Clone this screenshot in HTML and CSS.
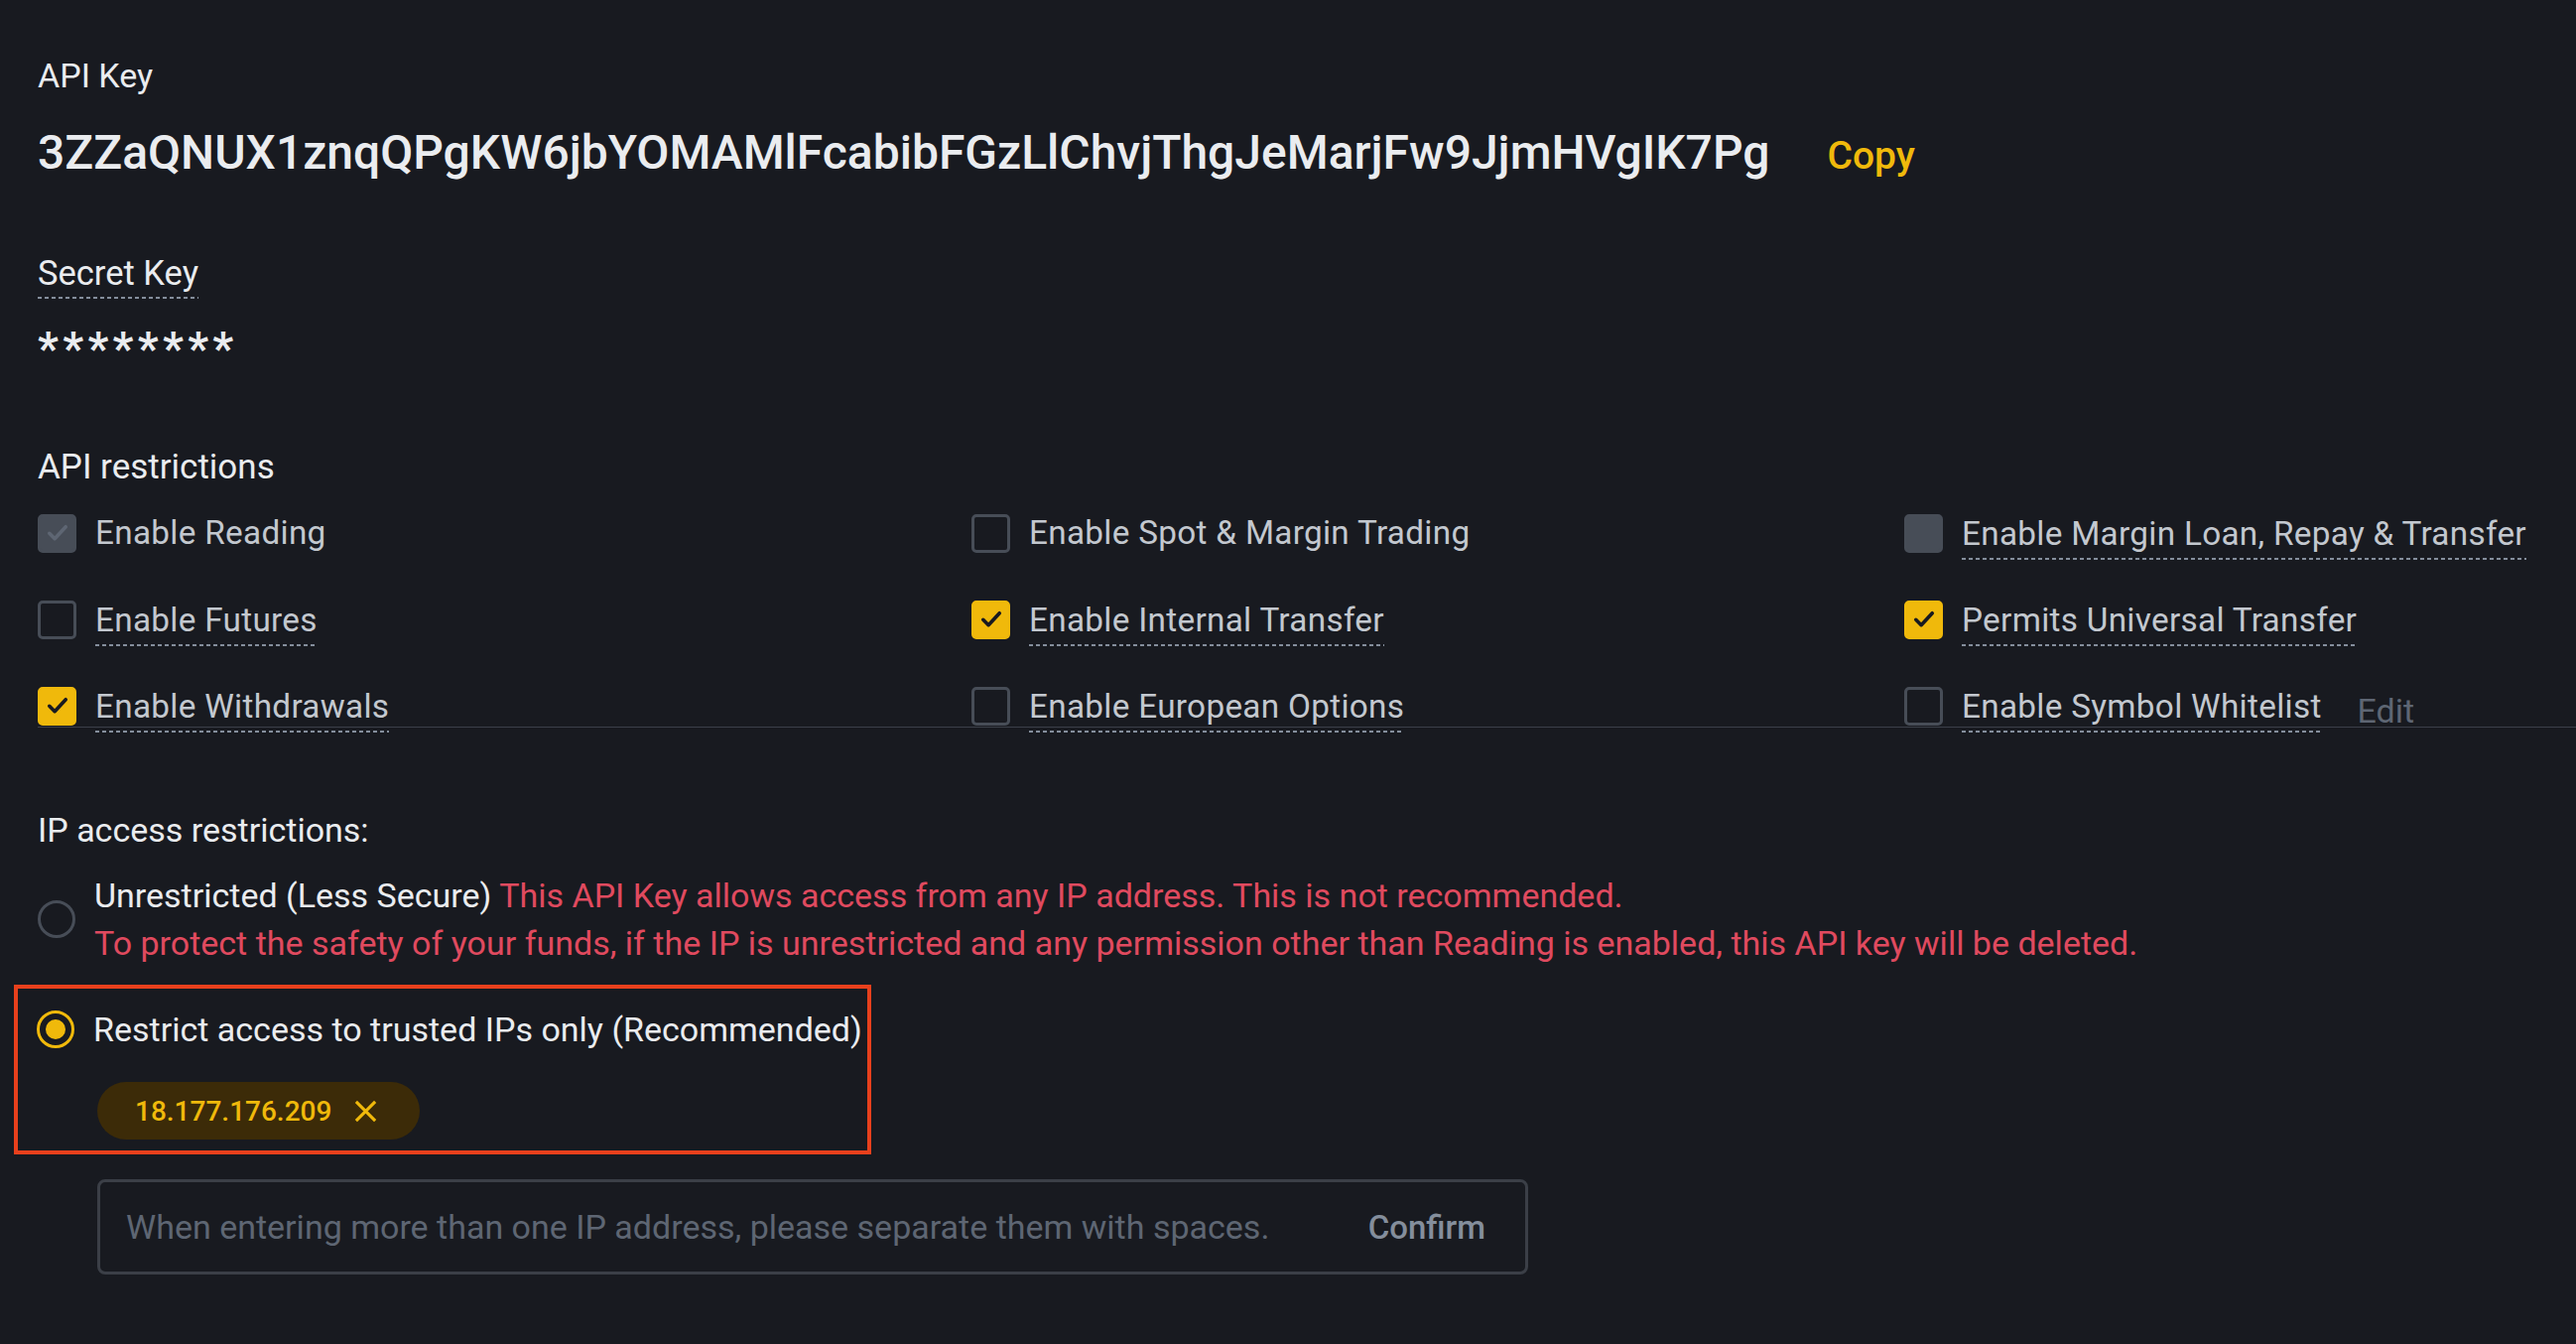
FILE: index.html
```html
<!DOCTYPE html>
<html lang="en">
<head>
<meta charset="utf-8">
<title>API Key</title>
<link rel="stylesheet" href="styles.css">
</head>
<body>
<div class="page">
  <section class="keys">
    <div class="field-label">API Key</div>
    <div class="key-row">
      <span class="key-value">3ZZaQNUX1znqQPgKW6jbYOMAMlFcabibFGzLlChvjThgJeMarjFw9JjmHVgIK7Pg</span>
      <span class="copy">Copy</span>
    </div>
    <div class="field-label secret"><span class="dashed">Secret Key</span></div>
    <div class="stars">********</div>
  </section>

  <div class="section-title">API restrictions</div>
  <div class="perm-grid">
    <div class="perm"><span class="cb cb-disabled-checked"><svg viewBox="0 0 20 20"><path d="M4.5 10.2l3.6 3.6 7.4-8"/></svg></span><span class="perm-label">Enable Reading</span></div>
    <div class="perm"><span class="cb"></span><span class="perm-label">Enable Spot &amp; Margin Trading</span></div>
    <div class="perm"><span class="cb cb-disabled"></span><span class="perm-label dashed">Enable Margin Loan, Repay &amp; Transfer</span></div>

    <div class="perm"><span class="cb"></span><span class="perm-label dashed">Enable Futures</span></div>
    <div class="perm"><span class="cb cb-checked"><svg viewBox="0 0 20 20"><path d="M4.5 10.2l3.6 3.6 7.4-8"/></svg></span><span class="perm-label dashed">Enable Internal Transfer</span></div>
    <div class="perm"><span class="cb cb-checked"><svg viewBox="0 0 20 20"><path d="M4.5 10.2l3.6 3.6 7.4-8"/></svg></span><span class="perm-label dashed">Permits Universal Transfer</span></div>

    <div class="perm"><span class="cb cb-checked"><svg viewBox="0 0 20 20"><path d="M4.5 10.2l3.6 3.6 7.4-8"/></svg></span><span class="perm-label dashed">Enable Withdrawals</span></div>
    <div class="perm"><span class="cb"></span><span class="perm-label dashed">Enable European Options</span></div>
    <div class="perm"><span class="cb"></span><span class="perm-label dashed">Enable Symbol Whitelist</span><span class="edit">Edit</span></div>
  </div>
  <div class="divider"></div>

  <div class="section-title ip-title">IP access restrictions:</div>
  <div class="radio-option unrestricted">
    <span class="radio"></span>
    <div class="radio-text">
      <div><span class="opt-label">Unrestricted (Less Secure)</span> <span class="warn">This API Key allows access from any IP address. This is not recommended.</span></div>
      <div class="warn">To protect the safety of your funds, if the IP is unrestricted and any permission other than Reading is enabled, this API key will be deleted.</div>
    </div>
  </div>

  <div class="highlight">
    <div class="radio-option">
      <span class="radio radio-on"><span class="dot"></span></span>
      <span class="opt-label">Restrict access to trusted IPs only (Recommended)</span>
    </div>
    <div class="chip">
      <span class="chip-text">18.177.176.209</span>
      <svg class="chip-x" viewBox="0 0 26 26"><path d="M3 3L23 23M23 3L3 23"/></svg>
    </div>
  </div>

  <div class="ip-input">
    <span class="placeholder">When entering more than one IP address, please separate them with spaces.</span>
    <span class="confirm">Confirm</span>
  </div>
</div>
</body>
</html>
```
FILE: styles.css
```css
html, body {
  margin: 0;
  padding: 0;
  background: #181a20;
}
body {
  font-family: Roboto, "Liberation Sans", Arial, sans-serif;
  color: #eaecef;
  width: 2596px;
  height: 1354px;
  overflow: hidden;
}
.page {
  padding: 56px 0 0 38px;
}
.field-label {
  font-size: 34px;
  line-height: 40px;
  color: #eaecef;
}
.key-row {
  margin-top: 26px;
  display: flex;
  align-items: center;
  height: 64px;
}
.key-value {
  font-size: 48px;
  font-weight: 500;
  line-height: 64px;
  color: #eaecef;
  letter-spacing: 0;
}
.copy {
  margin-left: 58px;
  font-size: 39px;
  font-weight: 500;
  color: #f0b90b;
  line-height: 64px;
  padding-top: 6px;
}
.secret {
  margin-top: 69px;
  font-size: 34.5px;
}
.dashed {
  padding-bottom: 4px;
  background-image: linear-gradient(to right, #848e9c 0 55%, transparent 55% 100%);
  background-size: 7px 2px;
  background-repeat: repeat-x;
  background-position: left bottom;
}
.secret .dashed {
  display: inline-block;
  line-height: 40px;
  padding-bottom: 6px;
}
.stars {
  margin-top: 28px;
  font-size: 46px;
  line-height: 44px;
  height: 44px;
  font-weight: 700;
  letter-spacing: 4.3px;
  color: #eaecef;
}
.section-title {
  margin-top: 78px;
  font-size: 35px;
  line-height: 40px;
  color: #eaecef;
}
.perm-grid {
  margin-top: 14px;
  display: grid;
  grid-template-columns: 941px 940px 700px;
  grid-auto-rows: 64px;
  row-gap: 23px;
}
.perm {
  display: flex;
  align-items: center;
  white-space: nowrap;
}
.cb {
  width: 39px;
  height: 39px;
  box-sizing: border-box;
  border: 3px solid #474d57;
  border-radius: 5px;
  flex: none;
  display: flex;
  align-items: center;
  justify-content: center;
  margin-right: 19px;
}
.cb svg {
  width: 30px;
  height: 30px;
  fill: none;
  stroke-width: 2.4;
  stroke-linecap: round;
  stroke-linejoin: round;
}
.cb-checked {
  background: #f0b90b;
  border-color: #f0b90b;
}
.cb-checked svg {
  stroke: #181a20;
}
.cb-disabled-checked {
  background: #474d57;
  border-color: #474d57;
}
.cb-disabled-checked svg {
  stroke: #5e6673;
}
.cb-disabled {
  background: #474d57;
  border-color: #474d57;
}
.perm-label {
  font-size: 33.3px;
  line-height: 40px;
  color: #c3c8cf;
  letter-spacing: 0.3px;
}
.perm-label.dashed {
  padding-bottom: 6px;
  margin-top: 8px;
}
.edit {
  margin-left: 36px;
  margin-top: 10px;
  font-size: 34px;
  color: #5e6673;
}
.divider {
  margin-top: -11px;
  height: 1px;
  background: #3c4049;
  position: relative;
}
.ip-title {
  margin-top: 83px;
  font-size: 34px;
}
.radio-option {
  display: flex;
  align-items: center;
}
.unrestricted {
  margin-top: 22px;
}
.radio {
  width: 38px;
  height: 38px;
  box-sizing: border-box;
  border: 3px solid #474d57;
  border-radius: 50%;
  flex: none;
  margin-right: 19px;
  display: flex;
  align-items: center;
  justify-content: center;
}
.radio-on {
  border-color: #f0b90b;
}
.radio-on .dot {
  width: 20px;
  height: 20px;
  border-radius: 50%;
  background: #f0b90b;
}
.radio-text {
  font-size: 34px;
  line-height: 48px;
}
.opt-label {
  font-size: 34px;
  line-height: 44px;
  color: #eaecef;
}
.warn {
  color: #e04a5f;
}
.highlight {
  margin-top: 18px;
  margin-left: -24px;
  width: 864px;
  box-sizing: border-box;
  border: 4px solid #e8401c;
  padding: 19px 0 11px 19px;
}
.chip {
  margin-top: 31px;
  margin-left: 61px;
  width: 325px;
  height: 58px;
  box-sizing: border-box;
  border-radius: 29px;
  background: #3c2b08;
  display: flex;
  align-items: center;
  padding-left: 38px;
}
.chip-text {
  font-size: 28px;
  font-weight: 500;
  color: #f0b90b;
}
.chip-x {
  width: 25px;
  height: 25px;
  margin-left: 22px;
  stroke: #f0b90b;
  stroke-width: 3.2;
  fill: none;
}
.ip-input {
  margin-top: 25px;
  margin-left: 60px;
  width: 1442px;
  height: 96px;
  box-sizing: border-box;
  border: 3px solid #3b3f47;
  border-radius: 8px;
  display: flex;
  align-items: center;
  justify-content: space-between;
  padding: 0 40px 0 26px;
}
.placeholder {
  font-size: 34px;
  color: #5e6673;
}
.confirm {
  font-size: 33px;
  font-weight: 500;
  color: #848e9c;
}
```
